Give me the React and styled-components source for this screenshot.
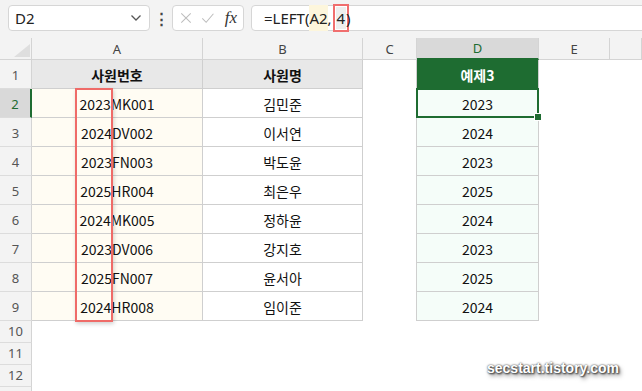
import styled, { createGlobalStyle } from "styled-components";

const GREEN = "#1e6c31";
const GRID = "#cfcfcf";

const rows = [
  ["2023MK001", "김민준", "2023"],
  ["2024DV002", "이서연", "2024"],
  ["2023FN003", "박도윤", "2023"],
  ["2025HR004", "최은우", "2025"],
  ["2024MK005", "정하윤", "2024"],
  ["2023DV006", "강지호", "2023"],
  ["2025FN007", "윤서아", "2025"],
  ["2024HR008", "임이준", "2024"],
];

const columns = ["A", "B", "C", "D", "E", ""];

export default function App() {
  return (
    <Page>
      <GlobalStyle />
      <Toolbar>
        <NameBox>
          <span>D2</span>
          <svg width="12" height="8" viewBox="0 0 12 8">
            <path d="M1.5 1.5 L6 6 L10.5 1.5" fill="none" stroke="#555" strokeWidth="1.3" />
          </svg>
        </NameBox>
        <Dots>⋮</Dots>
        <FxBox>
          <svg width="14" height="14" viewBox="0 0 14 14">
            <path d="M1.5 1.5 L12.5 12.5 M12.5 1.5 L1.5 12.5" stroke="#bdbdbd" strokeWidth="1.2" />
          </svg>
          <svg width="16" height="14" viewBox="0 0 16 14">
            <path d="M1.5 7.5 L6 12 L14.5 2" fill="none" stroke="#bdbdbd" strokeWidth="1.2" />
          </svg>
          <Fx>fx</Fx>
        </FxBox>
        <FormulaBox>
          =LEFT(<RefA2>A2</RefA2>, <RefNum>4</RefNum>)
        </FormulaBox>
      </Toolbar>

      <Sheet>
        <Corner>
          <svg width="16" height="13" viewBox="0 0 16 13">
            <path d="M16 0 L16 13 L0 13 Z" fill="#dedede" />
          </svg>
        </Corner>
        {columns.map((c, i) => (
          <ColHead key={i} $active={c === "D"}>{c}</ColHead>
        ))}

        <RowHead>1</RowHead>
        <Cell $kind="head">사원번호</Cell>
        <Cell $kind="head">사원명</Cell>
        <Cell />
        <Cell $kind="green">예제3</Cell>
        <Cell />
        <Cell />

        {rows.map((r, i) => (
          <Row key={i} n={i + 2} data={r} />
        ))}

        {[10, 11, 12, ""].map((n, i) => (
          <Blank key={i} n={n} />
        ))}

        <Highlight />
      </Sheet>

      <Watermark>secstart.tistory.com</Watermark>
    </Page>
  );
}

function Row({ n, data }) {
  return (
    <>
      <RowHead $active={n === 2}>{n}</RowHead>
      <Cell $kind="code">{data[0]}</Cell>
      <Cell $kind="name">{data[1]}</Cell>
      <Cell />
      <Cell $kind="result" $selected={n === 2}>{data[2]}</Cell>
      <Cell />
      <Cell />
    </>
  );
}

function Blank({ n }) {
  return (
    <>
      <RowHead $short>{n}</RowHead>
      <Cell />
      <Cell />
      <Cell />
      <Cell />
      <Cell />
      <Cell />
    </>
  );
}

const GlobalStyle = createGlobalStyle`
  body {
    margin: 0;
    background: #ffffff;
    overflow: hidden;
    font-family: "Noto Sans", "Noto Sans CJK KR", sans-serif;
  }
`;

const Page = styled.div`
  position: relative;
  width: 642px;
  height: 391px;
  overflow: hidden;
  background: #ffffff;
`;

const Toolbar = styled.div`
  display: flex;
  align-items: center;
  height: 38px;
  padding: 0 0 2px 8px;
  box-sizing: border-box;
  background: #f3f3f3;
`;

const Box = styled.div`
  height: 26px;
  box-sizing: border-box;
  background: #ffffff;
  border: 1px solid #d6d6d6;
  border-radius: 4px;
  display: flex;
  align-items: center;
`;

const NameBox = styled(Box)`
  width: 142px;
  padding: 0 7px 0 6px;
  justify-content: space-between;
  font-size: 15px;
  color: #222;
`;

const Dots = styled.div`
  width: 22px;
  text-align: center;
  font-size: 15px;
  font-weight: bold;
  color: #444;
`;

const FxBox = styled(Box)`
  width: 72px;
  padding: 0 6px 0 7px;
  gap: 9px;
`;

const Fx = styled.span`
  font-family: "Liberation Serif", serif;
  font-style: italic;
  font-size: 17px;
  color: #333;
  margin-left: 1px;
`;

const FormulaBox = styled(Box)`
  flex: 1;
  margin-left: 7px;
  margin-right: -10px;
  padding-left: 12px;
  font-size: 15px;
  color: #222;
  white-space: pre;
`;

const RefA2 = styled.span`
  background: #fdf6dc;
  padding: 3px 0;
`;

const RefNum = styled.span`
  outline: 2px solid #f06e6e;
  outline-offset: 1px;
  background: #eeeeee;
  padding: 1px 1px;
`;

const Sheet = styled.div`
  position: relative;
  display: grid;
  grid-template-columns: 32px 171px 160px 54px 122px 71px 32px;
  grid-template-rows: 22px repeat(9, 29px) repeat(4, 22px);
  font-family: "Noto Sans CJK KR", "Noto Sans", sans-serif;
`;

const Corner = styled.div`
  background: #f3f3f3;
  border-right: 1px solid #d4d4d4;
  border-bottom: 1px solid #d4d4d4;
  display: flex;
  align-items: flex-end;
  justify-content: flex-end;
  padding: 0 1px 2px 0;
`;

const ColHead = styled.div`
  background: ${(p) => (p.$active ? "#d9d9d9" : "#f3f3f3")};
  color: ${(p) => (p.$active ? GREEN : "#444")};
  border-right: 1px solid #d4d4d4;
  border-bottom: ${(p) => (p.$active ? `2px solid ${GREEN}` : "1px solid #d4d4d4")};
  font-family: "Noto Sans", sans-serif;
  font-size: 13px;
  display: flex;
  align-items: center;
  justify-content: center;
  box-sizing: border-box;
`;

const RowHead = styled.div`
  background: ${(p) => (p.$active ? "#d9d9d9" : "#f3f3f3")};
  color: ${(p) => (p.$active ? GREEN : "#555")};
  border-right: ${(p) => (p.$active ? `2px solid ${GREEN}` : "1px solid #d4d4d4")};
  border-bottom: 1px solid #dcdcdc;
  font-family: "Noto Sans", sans-serif;
  font-size: 13px;
  display: flex;
  align-items: flex-end;
  justify-content: center;
  padding-bottom: ${(p) => (p.$short ? "2px" : "4px")};
  box-sizing: border-box;
`;

const kinds = {
  head: { bg: "#e8e8e8", color: "#111", weight: 700 },
  green: { bg: GREEN, color: "#ffffff", weight: 700 },
  code: { bg: "#fffcf3", color: "#111", weight: 400 },
  name: { bg: "#ffffff", color: "#111", weight: 400 },
  result: { bg: "#f5fdf9", color: "#111", weight: 400 },
};

const Cell = styled.div`
  position: relative;
  box-sizing: border-box;
  display: flex;
  align-items: center;
  justify-content: center;
  font-size: 14px;
  padding-top: 1px;
  ${(p) => {
    const k = kinds[p.$kind];
    if (!k) return "";
    return `
      background: ${k.bg};
      color: ${k.color};
      font-weight: ${k.weight};
      border-right: 1px solid ${GRID};
      border-bottom: 1px solid ${GRID};
      ${p.$kind === "green" || p.$kind === "result" ? `border-left: 1px solid ${GRID}; margin-left: -1px;` : ""}
    `;
  }}
  ${(p) =>
    p.$selected &&
    `
    &::after {
      content: "";
      position: absolute;
      inset: -1px;
      border: 2px solid ${GREEN};
    }
    &::before {
      content: "";
      position: absolute;
      right: -4px;
      bottom: -4px;
      width: 6px;
      height: 6px;
      background: ${GREEN};
      border: 1px solid #fff;
      z-index: 2;
    }
  `}
`;

const Highlight = styled.div`
  position: absolute;
  left: 75px;
  top: 50px;
  width: 38px;
  height: 234px;
  box-sizing: border-box;
  border: 2px solid #ef6b68;
  box-shadow: 1px 2px 4px rgba(0, 0, 0, 0.18);
  pointer-events: none;
`;

const Watermark = styled.div`
  position: absolute;
  left: 487px;
  top: 359px;
  font-family: "Liberation Sans", sans-serif;
  font-weight: 700;
  font-size: 14px;
  line-height: 18px;
  color: #ffffff;
  text-shadow: 0 0 2px #333, 1px 1px 2px #333, 2px 3px 4px rgba(0, 0, 0, 0.5);
`;
